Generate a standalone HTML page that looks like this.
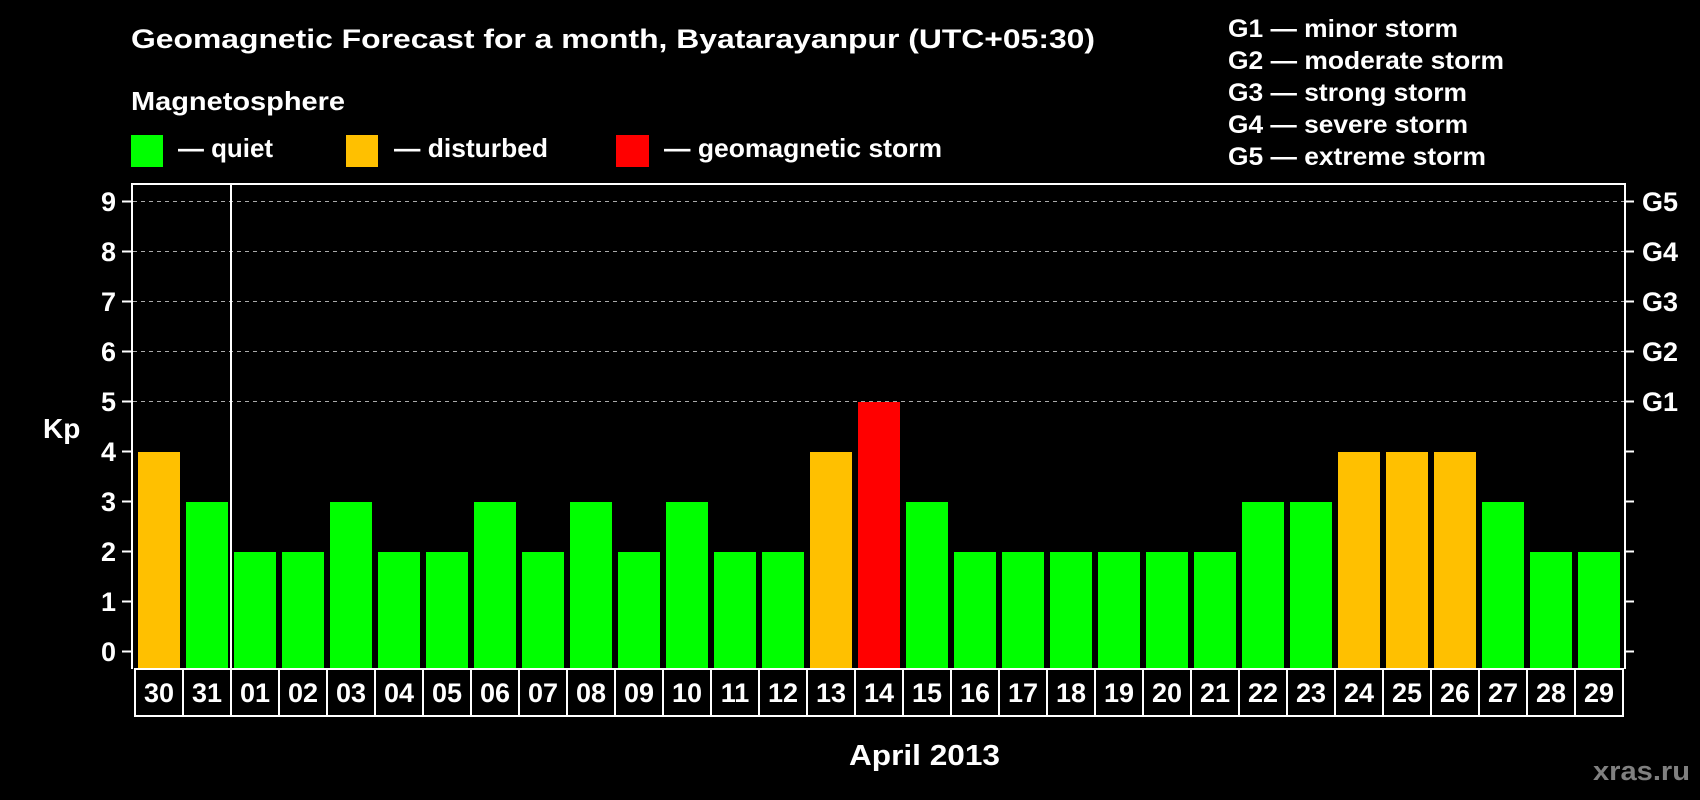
<!DOCTYPE html>
<html><head><meta charset="utf-8"><style>
html,body{margin:0;padding:0;background:#000;}
svg{display:block;}
text{font-family:"Liberation Sans",Arial,sans-serif;font-weight:bold;fill:#fff;}
</style></head><body>
<svg width="1700" height="800" viewBox="0 0 1700 800" xmlns="http://www.w3.org/2000/svg">
<rect width="1700" height="800" fill="#000"/>
<text x="131" y="48" font-size="27" textLength="964" lengthAdjust="spacingAndGlyphs">Geomagnetic Forecast for a month, Byatarayanpur (UTC+05:30)</text>
<text x="131" y="110" font-size="26" textLength="214" lengthAdjust="spacingAndGlyphs">Magnetosphere</text>
<rect x="131" y="135" width="32" height="32" fill="#00ff00"/>
<rect x="346" y="135" width="32" height="32" fill="#ffc000"/>
<rect x="616" y="135" width="33" height="32" fill="#ff0000"/>
<text x="178" y="157" font-size="26" textLength="95" lengthAdjust="spacingAndGlyphs">— quiet</text>
<text x="394" y="157" font-size="26" textLength="154" lengthAdjust="spacingAndGlyphs">— disturbed</text>
<text x="664" y="157" font-size="26" textLength="278" lengthAdjust="spacingAndGlyphs">— geomagnetic storm</text>
<g font-size="25">
<text x="1228" y="37" textLength="230" lengthAdjust="spacingAndGlyphs">G1 — minor storm</text>
<text x="1228" y="69" textLength="276" lengthAdjust="spacingAndGlyphs">G2 — moderate storm</text>
<text x="1228" y="101" textLength="239" lengthAdjust="spacingAndGlyphs">G3 — strong storm</text>
<text x="1228" y="133" textLength="240" lengthAdjust="spacingAndGlyphs">G4 — severe storm</text>
<text x="1228" y="165" textLength="258" lengthAdjust="spacingAndGlyphs">G5 — extreme storm</text>
</g>
<g stroke="#aaa" stroke-width="1" stroke-dasharray="4,4">
<line x1="133" y1="201.5" x2="1624" y2="201.5"/>
<line x1="133" y1="251.5" x2="1624" y2="251.5"/>
<line x1="133" y1="301.5" x2="1624" y2="301.5"/>
<line x1="133" y1="351.5" x2="1624" y2="351.5"/>
<line x1="133" y1="401.5" x2="1624" y2="401.5"/>
</g>
<g>
<rect x="138" y="452" width="42" height="216" fill="#ffc000"/>
<rect x="186" y="502" width="42" height="166" fill="#00ff00"/>
<rect x="234" y="552" width="42" height="116" fill="#00ff00"/>
<rect x="282" y="552" width="42" height="116" fill="#00ff00"/>
<rect x="330" y="502" width="42" height="166" fill="#00ff00"/>
<rect x="378" y="552" width="42" height="116" fill="#00ff00"/>
<rect x="426" y="552" width="42" height="116" fill="#00ff00"/>
<rect x="474" y="502" width="42" height="166" fill="#00ff00"/>
<rect x="522" y="552" width="42" height="116" fill="#00ff00"/>
<rect x="570" y="502" width="42" height="166" fill="#00ff00"/>
<rect x="618" y="552" width="42" height="116" fill="#00ff00"/>
<rect x="666" y="502" width="42" height="166" fill="#00ff00"/>
<rect x="714" y="552" width="42" height="116" fill="#00ff00"/>
<rect x="762" y="552" width="42" height="116" fill="#00ff00"/>
<rect x="810" y="452" width="42" height="216" fill="#ffc000"/>
<rect x="858" y="402" width="42" height="266" fill="#ff0000"/>
<rect x="906" y="502" width="42" height="166" fill="#00ff00"/>
<rect x="954" y="552" width="42" height="116" fill="#00ff00"/>
<rect x="1002" y="552" width="42" height="116" fill="#00ff00"/>
<rect x="1050" y="552" width="42" height="116" fill="#00ff00"/>
<rect x="1098" y="552" width="42" height="116" fill="#00ff00"/>
<rect x="1146" y="552" width="42" height="116" fill="#00ff00"/>
<rect x="1194" y="552" width="42" height="116" fill="#00ff00"/>
<rect x="1242" y="502" width="42" height="166" fill="#00ff00"/>
<rect x="1290" y="502" width="42" height="166" fill="#00ff00"/>
<rect x="1338" y="452" width="42" height="216" fill="#ffc000"/>
<rect x="1386" y="452" width="42" height="216" fill="#ffc000"/>
<rect x="1434" y="452" width="42" height="216" fill="#ffc000"/>
<rect x="1482" y="502" width="42" height="166" fill="#00ff00"/>
<rect x="1530" y="552" width="42" height="116" fill="#00ff00"/>
<rect x="1578" y="552" width="42" height="116" fill="#00ff00"/>
</g>
<g stroke="#fff" stroke-width="2" fill="none">
<path d="M132 669 V184 H1625 V669"/>
<line x1="231" y1="184" x2="231" y2="669"/>
<rect x="135" y="669" width="1488" height="47"/>
<path d="M122 201.5h9M122 251.5h9M122 301.5h9M122 351.5h9M122 401.5h9M122 451.5h9M122 501.5h9M122 551.5h9M122 601.5h9M122 651.5h9"/>
<path d="M1625 201.5h9M1625 251.5h9M1625 301.5h9M1625 351.5h9M1625 401.5h9M1625 451.5h9M1625 501.5h9M1625 551.5h9M1625 601.5h9M1625 651.5h9"/>
<path d="M183 669v47M231 669v47M279 669v47M327 669v47M375 669v47M423 669v47M471 669v47M519 669v47M567 669v47M615 669v47M663 669v47M711 669v47M759 669v47M807 669v47M855 669v47M903 669v47M951 669v47M999 669v47M1047 669v47M1095 669v47M1143 669v47M1191 669v47M1239 669v47M1287 669v47M1335 669v47M1383 669v47M1431 669v47M1479 669v47M1527 669v47M1575 669v47"/>
</g>
<g font-size="27" text-anchor="end">
<text x="116" y="211">9</text><text x="116" y="261">8</text><text x="116" y="311">7</text><text x="116" y="361">6</text><text x="116" y="411">5</text><text x="116" y="461">4</text><text x="116" y="511">3</text><text x="116" y="561">2</text><text x="116" y="611">1</text><text x="116" y="661">0</text>
</g>
<text x="43" y="438" font-size="28">Kp</text>
<g font-size="27">
<text x="1642" y="211">G5</text><text x="1642" y="261">G4</text><text x="1642" y="311">G3</text><text x="1642" y="361">G2</text><text x="1642" y="411">G1</text>
</g>
<g font-size="27" text-anchor="middle">
<text x="159" y="702">30</text><text x="207" y="702">31</text><text x="255" y="702">01</text><text x="303" y="702">02</text><text x="351" y="702">03</text><text x="399" y="702">04</text><text x="447" y="702">05</text><text x="495" y="702">06</text><text x="543" y="702">07</text><text x="591" y="702">08</text><text x="639" y="702">09</text><text x="687" y="702">10</text><text x="735" y="702">11</text><text x="783" y="702">12</text><text x="831" y="702">13</text><text x="879" y="702">14</text><text x="927" y="702">15</text><text x="975" y="702">16</text><text x="1023" y="702">17</text><text x="1071" y="702">18</text><text x="1119" y="702">19</text><text x="1167" y="702">20</text><text x="1215" y="702">21</text><text x="1263" y="702">22</text><text x="1311" y="702">23</text><text x="1359" y="702">24</text><text x="1407" y="702">25</text><text x="1455" y="702">26</text><text x="1503" y="702">27</text><text x="1551" y="702">28</text><text x="1599" y="702">29</text>
</g>
<text x="849" y="765" font-size="29" textLength="151" lengthAdjust="spacingAndGlyphs">April 2013</text>
<text x="1593" y="780" font-size="27" style="fill:#808080" textLength="97" lengthAdjust="spacingAndGlyphs">xras.ru</text>
</svg>
</body></html>
